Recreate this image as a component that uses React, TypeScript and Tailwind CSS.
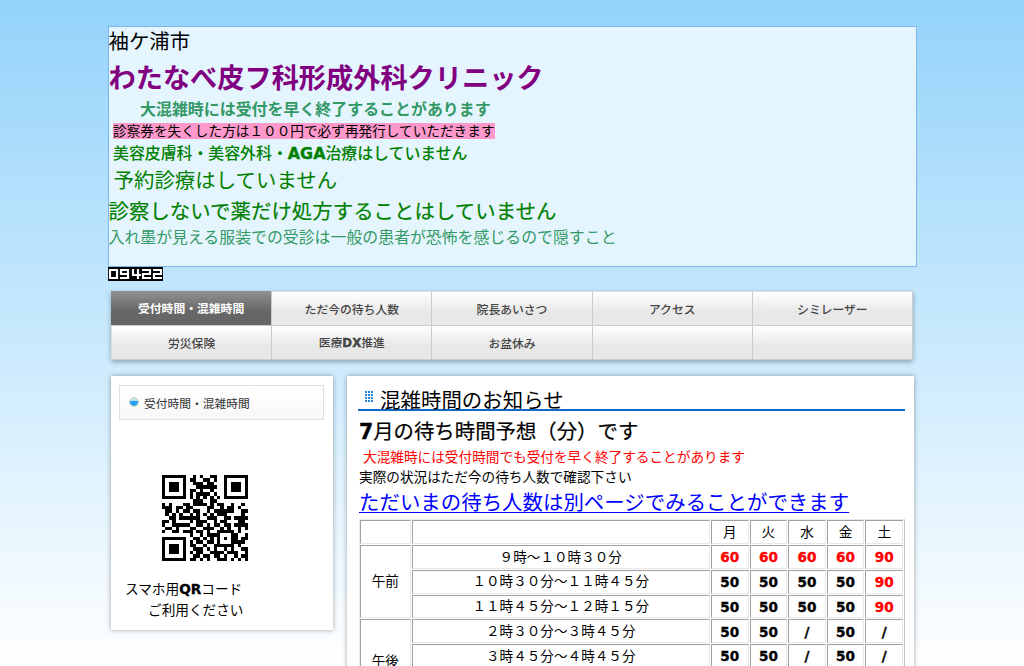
import React from "react";

const latin = "font-['DejaVu_Sans','Noto_Sans_CJK_JP',sans-serif] font-bold [-webkit-text-stroke:0.35px_currentColor]";

const qrRows = [
  "1111111001010011001111111",
  "1000001011001101001000001",
  "1011101001110110001011101",
  "1011101000111111001011101",
  "1011101011010010001011101",
  "1000001010111101001000001",
  "1111111010101010101111111",
  "0000000001110011000000000",
  "1010001101111010110010010",
  "1110110110000110010110100",
  "0110101101100101111110011",
  "0101010010101010111000010",
  "0011011111100111001101111",
  "1101000010111001011000110",
  "1001111100110101101101111",
  "0110100011001110010100101",
  "1001101110110100111110100",
  "0000000010010111100011001",
  "1111111001101010101011011",
  "1000001010110110100011110",
  "1011101011001001111110100",
  "1011101001110101001010011",
  "1011101010110011110111001",
  "1000001001101101101001011",
  "1111111011010100111010101",
];

function ring(x: number, y: number, cx: number, cy: number) {
  return Math.max(Math.abs(x - cx), Math.abs(y - cy));
}

function moduleIsDark(x: number, y: number) {
  for (const [cx, cy] of [[3, 3], [21, 3], [3, 21]]) {
    const d = ring(x, y, cx, cy);
    if (d <= 4) return d <= 1 || d === 3;
  }
  const d = ring(x, y, 18, 18);
  if (d <= 2) return d !== 1;
  if (x === 6 || y === 6) return (x + y) % 2 === 0;
  return qrRows[y][x] === "1";
}

function QrCode() {
  return (
    <svg width="86" height="86" viewBox="0 0 25 25" shapeRendering="crispEdges">
      {qrRows.map((row, y) =>
        row.split("").map((_, x) => (moduleIsDark(x, y) ? <rect key={`${x}-${y}`} x={x} y={y} width="1" height="1" /> : null)),
      )}
    </svg>
  );
}

const digits: Record<string, string> = {
  "0": "M2 3H9V11H2Z",
  "9": "M9 7H2V3H9V11H1",
  "4": "M3 2V8H11M8 2V12",
  "2": "M1 3H9V7H2V11H10",
};

function Counter() {
  return (
    <div className="flex h-[14px] w-[55px] bg-black">
      {"09422".split("").map((d, i) => (
        <svg key={i} width="11" height="14" viewBox="0 0 11 14" fill="none" stroke="white" strokeWidth="2.2">
          <path d={digits[d]} />
        </svg>
      ))}
    </div>
  );
}

const nav: React.ReactNode[] = [
  "受付時間・混雑時間",
  "ただ今の待ち人数",
  "院長あいさつ",
  "アクセス",
  "シミレーザー",
  "労災保険",
  <>医療<span className={latin}>DX</span>推進</>,
  "お盆休み",
  "",
  "",
];

function Cell({ children, className = "" }: { children?: React.ReactNode; className?: string }) {
  return (
    <div className={`flex items-center justify-center whitespace-nowrap border border-t-[#a0a0a0] border-l-[#a0a0a0] border-r-[#e8e8e8] border-b-[#e8e8e8] ${className}`}>
      {children}
    </div>
  );
}

const times: [string, string[]][] = [
  ["９時～１０時３０分", ["60", "60", "60", "60", "90"]],
  ["１０時３０分～１１時４５分", ["50", "50", "50", "50", "90"]],
  ["１１時４５分～１２時１５分", ["50", "50", "50", "50", "90"]],
  ["２時３０分～３時４５分", ["50", "50", "/", "50", "/"]],
  ["３時４５分～４時４５分", ["50", "50", "/", "50", "/"]],
];

function TimeTable() {
  return (
    <div className="mt-[1px] grid w-[546px] auto-rows-[23.85px] grid-cols-[50.5px_298.5px_repeat(5,37.6px)] gap-[1px] border border-[#eaeaea] border-r-[#c4c4c4] text-[13.6px]">
      <Cell />
      <Cell />
      {["月", "火", "水", "金", "土"].map((d) => (
        <Cell key={d} className="pb-[2px]">{d}</Cell>
      ))}
      {times.map(([label, values], r) => (
        <React.Fragment key={label}>
          {r % 3 === 0 && <Cell className="row-span-3 pb-[2px]">{r === 0 ? "午前" : <span className="pt-[10px]">午後</span>}</Cell>}
          <Cell className="pb-[2px]">{label}</Cell>
          {values.map((v, c) => (
            <Cell key={c} className={`${latin} ${r < 3 && (r === 0 || c === 4) ? "text-[#ff0000]" : "text-black"}`}>
              <span className="pt-[1px]">{v}</span>
            </Cell>
          ))}
        </React.Fragment>
      ))}
    </div>
  );
}

export default function App() {
  return (
    <div className="h-[666px] overflow-hidden bg-linear-to-b from-[#94d3fa] via-[#c8e9fd] via-50% to-white font-['Noto_Sans_CJK_JP',sans-serif] text-black">
      <div className="ml-[107.5px] w-[809px] pt-[25.5px]">
        <header className="h-[241px] border border-[#7db5ec] bg-[#e5f5fe] whitespace-nowrap">
          <div className="h-[29px] text-[20.4px] leading-[27px]">袖ケ浦市</div>
          <h1 className="h-[42px] text-[27.2px] leading-[40px] font-bold text-[#800080]">わたなべ皮フ科形成外科クリニック</h1>
          <div className="h-[22px] pl-[31.5px] text-[15.95px] leading-[20px] font-bold text-[#339966]">大混雑時には受付を早く終了することがあります</div>
          <div className="flex h-[22px] items-center pl-[4.5px] text-[13.65px]">
            <span className="h-[16px] bg-[#ff99cc] leading-[15px]">診察券を失くした方は１００円で必ず再発行していただきます</span>
          </div>
          <div className="h-[22px] pl-[4.5px] text-[15.9px] leading-[22px] font-medium text-[#008000]"><span>美容皮膚科・美容外科・</span><span className={latin}>AGA</span><span>治療はしていません</span></div>
          <div className="h-[32px] pl-[5px] text-[20.4px] leading-[31px] tracking-[0.05px] text-[#008000]">予約診療はしていません</div>
          <div className="h-[30px] text-[20.4px] leading-[29px] tracking-[0.05px] text-[#008000] [-webkit-text-stroke:0.2px_currentColor]">診察しないで薬だけ処方することはしていません</div>
          <div className="h-[22px] text-[15.9px] leading-[22px] text-[#339966]">入れ墨が見える服装での受診は一般の患者が恐怖を感じるので隠すこと</div>
        </header>
        <Counter />
      </div>
      <nav className="mt-[10.5px] ml-[111px] grid w-[802px] grid-cols-5 border-t border-l border-[#dcdcdc] shadow-[0_2px_5px_rgba(0,0,0,0.3)]">
        {nav.map((item, i) => (
          <div
            key={i}
            className={`flex items-center justify-center border-r border-b border-[#ccc] text-[11.8px] ${
              i === 0 ? "-mt-px -ml-px h-[35px] bg-linear-to-b from-[#929292] to-[#666] to-60% font-bold text-white" : "h-[34px] bg-linear-to-b from-white to-[#e8e8e8] to-60% font-medium text-[#444]"
            }`}
          >
            <span>{item}</span>
          </div>
        ))}
      </nav>
      <div className="mt-[16px] ml-[111px] flex items-start gap-[14px]">
        <aside className="h-[254px] w-[222px] bg-white px-[8px] pt-[9px] shadow-[0_0_5px_rgba(0,0,0,0.35)]">
          <div className="flex h-[35px] w-[205px] items-center border border-[#e0e0e0] bg-linear-to-b from-white to-[#f7f7f7] pl-[9px] text-[11.75px] text-[#333]">
            <svg width="10" height="10" viewBox="0 0 9 9" className="mr-[5px] mb-[1px]">
              <circle cx="4.5" cy="4.5" r="4" fill="#c6e4ef" stroke="#b5c9ad" strokeWidth=".7" />
              <path d="M.8 3.8Q4.5 2.8 8.2 3.8A3.7 3.7 0 0 1 .8 4.4Z" fill="#25a0f5" />
            </svg>
            受付時間・混雑時間
          </div>
          <div className="mt-[55px] ml-[43px] h-[86px]"><QrCode /></div>
          <div className="mt-[17px] pl-[6px] text-[13.65px] leading-[20.3px]">
            <div>スマホ用<span className={latin}>QR</span>コード</div>
            <div className="pl-[23px]">ご利用ください</div>
          </div>
        </aside>
        <main className="h-[310px] w-[567px] bg-white pt-[8px] pl-[12px] whitespace-nowrap shadow-[0_0_5px_rgba(0,0,0,0.35)]">
          <h2 className="-ml-px flex h-[27px] w-[547px] items-center border-b-2 border-[#1269c4] pl-[7px] text-[20.4px] leading-none tracking-[0.07px]">
            <svg width="8" height="11" viewBox="0 0 8 11" className="mr-[7px] mb-[1px]" fill="#2483dc" shapeRendering="crispEdges">
              {[0, 3, 6].flatMap((x) => [0, 3, 6, 9].map((y) => <rect key={`${x}${y}`} x={x} y={y} width="2" height="2" />))}
            </svg>
            <span className="pt-[6px]">混雑時間のお知らせ</span>
          </h2>
          <div className="h-[36px] text-[20.4px] leading-[38px] [-webkit-text-stroke:0.2px_currentColor]"><span className={latin}>7</span>月の待ち時間予想（分）です</div>
          <div className="h-[20px] pl-[4px] text-[13.65px] leading-[18px] text-[#ff0000]">大混雑時には受付時間でも受付を早く終了することがあります</div>
          <div className="h-[20px] text-[13.65px] leading-[18px]">実際の状況はただ今の待ち人数で確認下さい</div>
          <div className="h-[31px] text-[20.4px] leading-[29px] tracking-[0.05px]">
            <a href="#" className="text-[#0000ff] underline decoration-1 underline-offset-[2px]">ただいまの待ち人数は別ページでみることができます</a>
          </div>
          <TimeTable />
        </main>
      </div>
    </div>
  );
}
